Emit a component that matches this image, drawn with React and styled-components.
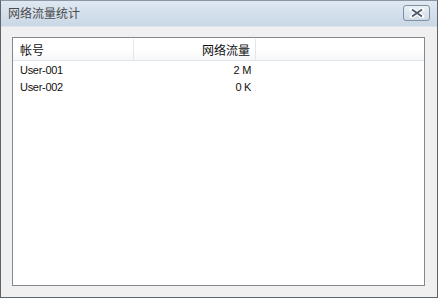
import styled, { createGlobalStyle } from "styled-components";

const Global = createGlobalStyle`
  html, body { margin: 0; padding: 0; background: #ffffff; }
  body { font-family: "Liberation Sans", "Noto Sans CJK SC", sans-serif; font-size: 11px; }
`;

const rows = [
  { account: "User-001", traffic: "2 M" },
  { account: "User-002", traffic: "0 K" },
];

function App() {
  return (
    <>
      <Global />
      <Window>
        <TitleBar>
          <Title>网络流量统计</Title>
          <CloseButton>
            <svg width="16" height="10" viewBox="0 0 16 10">
              <path d="M3 1.5 L13 8.5 M13 1.5 L3 8.5" stroke="#fff" strokeWidth="4" strokeLinecap="square" />
              <path d="M3 1.5 L13 8.5 M13 1.5 L3 8.5" stroke="#4c5a6a" strokeWidth="1.8" />
            </svg>
          </CloseButton>
        </TitleBar>
        <Body>
          <ListView>
            <Header>
              <HeadCell $w={121}>帐号</HeadCell>
              <HeadCell $w={122} $right>网络流量</HeadCell>
              <HeadFill />
            </Header>
            {rows.map((r) => (
              <Row key={r.account}>
                <Cell $w={121}>{r.account}</Cell>
                <Cell $w={122} $right>{r.traffic}</Cell>
              </Row>
            ))}
          </ListView>
        </Body>
      </Window>
    </>
  );
}

export default App;

const Window = styled.div`
  width: 438px;
  height: 298px;
  box-sizing: border-box;
  border: 1px solid #5c6470;
  border-top-color: #8a96a4;
  display: flex;
  flex-direction: column;
  background: #f0f0f0;
`;

const TitleBar = styled.div`
  height: 25px;
  flex: none;
  display: flex;
  align-items: center;
  justify-content: space-between;
  padding: 0 7px 0 7px;
  background: linear-gradient(#dfe8f2, #c9d7e6);
  border-bottom: 1px solid #dde3ea;
`;

const Title = styled.span`
  font-family: "Noto Sans CJK SC", sans-serif;
  font-size: 12px;
  color: #4a4a4a;
  margin-top: -2px;
`;

const CloseButton = styled.div`
  width: 27px;
  height: 16px;
  margin-top: -2px;
  box-sizing: border-box;
  border: 1px solid #7f8fa2;
  border-radius: 3px;
  background: linear-gradient(#eaf0f6, #cfdbe7);
  display: flex;
  align-items: center;
  justify-content: center;
`;

const Body = styled.div`
  flex: 1;
  display: flex;
  padding: 10px 12px 11px 11px;
`;

const ListView = styled.div`
  flex: 1;
  background: #fff;
  border: 1px solid #828790;
  padding-top: 1px;
`;

const Header = styled.div`
  display: flex;
  height: 21px;
  background: linear-gradient(#ffffff 50%, #f6f7f9);
  border-bottom: 1px solid #e3e6ea;
`;

const HeadCell = styled.div`
  width: ${(p) => p.$w}px;
  flex: none;
  box-sizing: border-box;
  padding: 0 5px 0 7px;
  display: flex;
  align-items: center;
  justify-content: ${(p) => (p.$right ? "flex-end" : "flex-start")};
  border-right: 1px solid #e3e6ea;
  font-family: "Noto Sans CJK SC", sans-serif;
  font-size: 12px;
  color: #111;
`;

const HeadFill = styled.div`
  flex: 1;
`;

const Row = styled.div`
  display: flex;
  height: 17px;
  align-items: center;
`;

const Cell = styled.div`
  width: ${(p) => p.$w}px;
  flex: none;
  box-sizing: border-box;
  padding: 0 5px 0 7px;
  text-align: ${(p) => (p.$right ? "right" : "left")};
  letter-spacing: -0.3px;
  color: #111;
`;
